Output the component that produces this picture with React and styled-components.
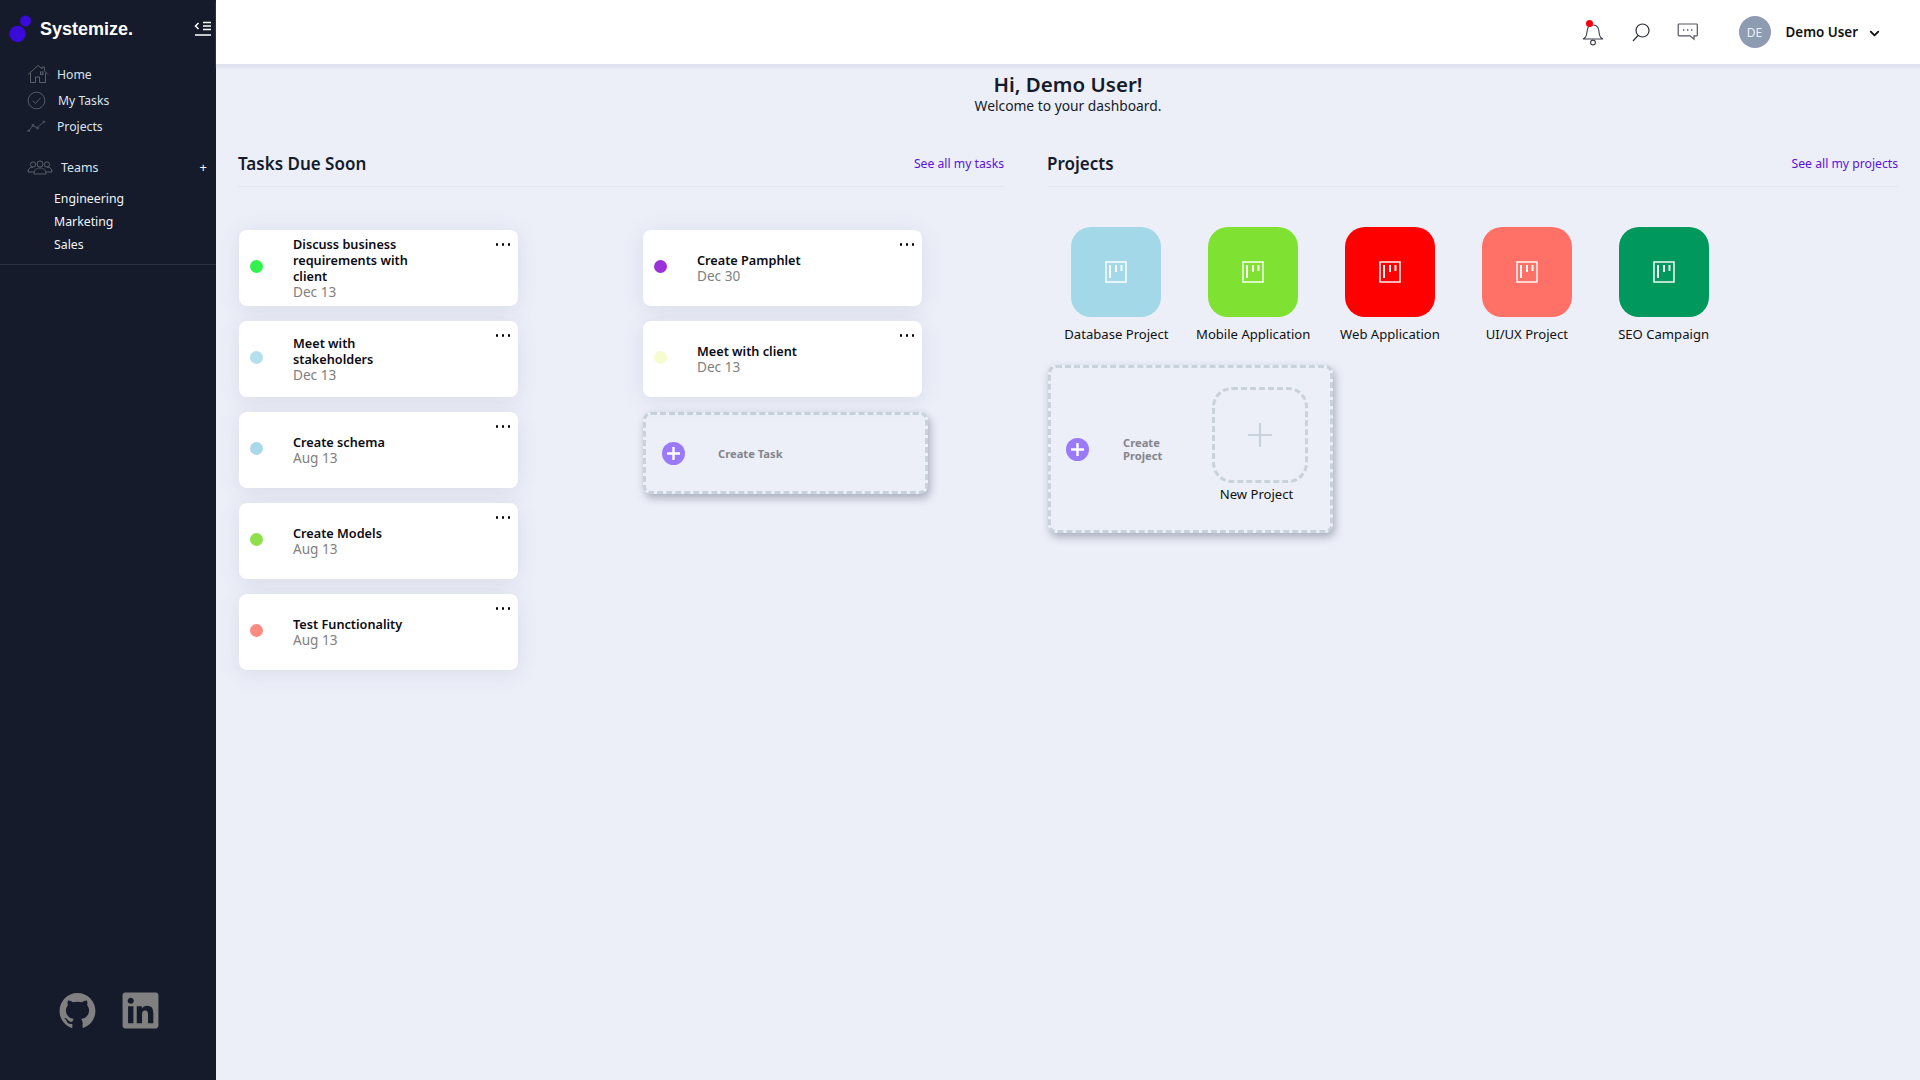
import React from "react";
import styled, { createGlobalStyle } from "styled-components";
import { FaLinkedin } from "react-icons/fa";
import { AiFillGithub } from "react-icons/ai";
import { ChevronDown } from "lucide-react";

const GlobalStyle = createGlobalStyle`
  html, body {
    margin: 0;
    padding: 0;
    height: 100%;
    background: #eceff8;
    font-family: "Noto Sans", sans-serif;
  }
  * {
    box-sizing: border-box;
  }
`;

const tasksLeft = [
  { id: 1, name: "Discuss business requirements with client", due: "Dec 13", color: "#33f24d" },
  { id: 2, name: "Meet with stakeholders", due: "Dec 13", color: "#b5dfec" },
  { id: 3, name: "Create schema", due: "Aug 13", color: "#a9d9e8" },
  { id: 4, name: "Create Models", due: "Aug 13", color: "#8ee04d" },
  { id: 5, name: "Test Functionality", due: "Aug 13", color: "#fb8a80" },
];

const tasksRight = [
  { id: 6, name: "Create Pamphlet", due: "Dec 30", color: "#9b30d9" },
  { id: 7, name: "Meet with client", due: "Dec 13", color: "#f6fbd0" },
];

const projects = [
  { name: "Database Project", color: "#a3d8e8" },
  { name: "Mobile Application", color: "#7fe232" },
  { name: "Web Application", color: "#ff0000" },
  { name: "UI/UX Project", color: "#ff7066" },
  { name: "SEO Campaign", color: "#00985c" },
];

const Page = styled.div`
  display: flex;
  min-height: 1080px;
`;

const Sidebar = styled.aside`
  width: 216px;
  flex-shrink: 0;
  height: 1080px;
  background: #151b2a;
  display: flex;
  flex-direction: column;
`;

const Brand = styled.div`
  display: flex;
  align-items: center;
  height: 58px;
  padding: 0 4px 0 9px;
`;

const BrandName = styled.span`
  margin-left: 9px;
  flex: 1;
  font-family: "Liberation Sans", Arial, sans-serif;
  font-weight: 700;
  font-size: 18px;
  color: #fff;
`;

const Nav = styled.nav`
  display: flex;
  flex-direction: column;
  padding-left: 27px;
  margin-top: 3px;
`;

const NavItem = styled.a`
  display: flex;
  align-items: center;
  height: 26px;
  color: #dbe3ee;
  font-size: 12.2px;
  svg {
    width: ${(p) => p.$iconW || 22}px;
    flex-shrink: 0;
    margin-right: ${(p) => p.$gap || 9}px;
  }
`;

const TeamsRow = styled.div`
  display: flex;
  align-items: center;
  height: 26px;
  margin-top: 15px;
  padding: 0 9px 0 27px;
  color: #dbe3ee;
  font-size: 12.4px;
  svg {
    width: 26px;
    margin-right: 8px;
  }
  span:first-of-type {
    flex: 1;
  }
`;

const Plus = styled.span`
  color: #fff;
  font-size: 13px;
`;

const TeamList = styled.div`
  display: flex;
  flex-direction: column;
  padding: 7px 0 8px 54px;
  border-bottom: 1px solid #2b3144;
`;

const TeamLink = styled.a`
  height: 23px;
  line-height: 23px;
  color: #f1f4f8;
  font-size: 12.3px;
`;

const Socials = styled.div`
  margin-top: auto;
  display: flex;
  gap: 22px;
  padding: 0 0 49px 57px;
  color: #808080;
  svg {
    width: 41px;
    height: 41px;
    display: block;
  }
`;

const Content = styled.div`
  flex: 1;
  display: flex;
  flex-direction: column;
`;

const Topbar = styled.header`
  height: 66px;
  background: #fff;
  border-bottom: 2px solid #e0e3ee;
  box-shadow: 0 2px 2px rgba(200, 205, 225, 0.35);
  display: flex;
  align-items: center;
  justify-content: flex-end;
  padding: 0 38px 0 0;
`;

const TopIcon = styled.button`
  position: relative;
  border: 0;
  background: none;
  padding: 0;
  display: flex;
  margin-right: ${(p) => p.$mr}px;
  margin-top: ${(p) => p.$mt || 0}px;
`;

const RedDot = styled.i`
  position: absolute;
  left: 4px;
  top: -2px;
  width: 7px;
  height: 7px;
  border-radius: 50%;
  background: #f5000c;
`;

const Avatar = styled.div`
  width: 32px;
  height: 32px;
  border-radius: 50%;
  background: #8f9bb3;
  color: #eef1f6;
  font-size: 12px;
  display: flex;
  align-items: center;
  justify-content: center;
`;

const UserName = styled.span`
  margin: 0 9px 0 15px;
  font-size: 13.4px;
  font-weight: 600;
  color: #111;
`;

const Main = styled.main`
  padding: 6px 22px 0 22px;
`;

const Greeting = styled.div`
  text-align: center;
  h1 {
    margin: 0;
    font-size: 20.5px;
    line-height: 24px;
    font-weight: 600;
    color: #151b2a;
  }
  p {
    margin: 1px 0 0;
    font-size: 13.8px;
    line-height: 18px;
    color: #151b2a;
  }
`;

const Columns = styled.div`
  display: grid;
  grid-template-columns: 766px 851px;
  column-gap: 43px;
  margin-top: 34px;
`;

const SectionHead = styled.div`
  display: flex;
  justify-content: space-between;
  align-items: center;
  height: 38px;
  border-bottom: 1px solid #e4e7f0;
  padding-bottom: 9px;
  h2 {
    margin: 0;
    font-size: 17px;
    font-weight: 600;
    color: #151b2a;
  }
  a {
    font-size: 12.2px;
    color: #5a10e0;
  }
`;

const TaskGrid = styled.div`
  display: grid;
  grid-template-columns: 404px 1fr;
  margin: 43px 0 0 1px;
`;

const TaskColumn = styled.div`
  display: flex;
  flex-direction: column;
  gap: 15px;
`;

const TaskCard = styled.div`
  position: relative;
  width: 279px;
  height: 76px;
  background: #fff;
  border-radius: 8px;
  box-shadow: 0 3px 22px rgba(60, 70, 100, 0.1);
  display: flex;
  align-items: center;
  padding-left: 11px;
`;

const Dot = styled.span`
  width: 13px;
  height: 13px;
  border-radius: 50%;
  background: ${(p) => p.$color};
  flex-shrink: 0;
  margin: 0 30px 4px 0;
`;

const TaskText = styled.div`
  width: 122px;
  padding-bottom: 2px;
  strong {
    display: block;
    font-size: 12.7px;
    line-height: 16px;
    font-weight: 600;
    color: #0c0c12;
  }
  span {
    display: block;
    font-size: 13.6px;
    line-height: 15px;
    color: #808080;
  }
`;

const More = styled.div`
  position: absolute;
  top: 13px;
  right: 8px;
  display: flex;
  gap: 3.5px;
  i {
    width: 2.5px;
    height: 2.5px;
    border-radius: 1px;
    background: #000;
  }
`;

const DashedCard = styled.div`
  width: 285px;
  height: ${(p) => p.$h}px;
  border: 3px dashed #c9d2da;
  border-radius: 8px;
  background: #eceff8;
  box-shadow: 2px 4px 8px rgba(40, 50, 70, 0.35);
  display: flex;
  align-items: center;
`;

const AddCircle = styled.span`
  width: 23px;
  height: 23px;
  border-radius: 50%;
  background: #9a7af8;
  display: flex;
  flex-shrink: 0;
  align-items: center;
  justify-content: center;
  margin-left: ${(p) => p.$ml}px;
`;

const AddLabel = styled.span`
  margin-left: ${(p) => p.$ml}px;
  width: ${(p) => p.$w || "auto"};
  font-size: 11.2px;
  line-height: 13px;
  font-weight: 700;
  color: #85858c;
`;

const ProjectRow = styled.div`
  display: flex;
  margin: 40px 0 0 1px;
`;

const ProjectItem = styled.div`
  width: 136.8px;
  display: flex;
  flex-direction: column;
  align-items: center;
  font-size: 13.1px;
  color: #111;
  white-space: nowrap;
  span {
    margin-top: 8px;
    line-height: 18px;
  }
`;

const ProjectTile = styled.div`
  width: 90px;
  height: 90px;
  border-radius: 20px;
  background: ${(p) => p.$color};
  display: flex;
  align-items: center;
  justify-content: center;
`;

const NewProjectWrap = styled.div`
  margin: 22px 0 0 1px;
`;

const NewProject = styled.div`
  display: flex;
  flex-direction: column;
  align-items: center;
  margin: 0 0 9px 42px;
  font-size: 13.1px;
  color: #111;
  span {
    margin-top: 2px;
    margin-left: -7px;
    line-height: 18px;
  }
`;

const NewTile = styled.div`
  width: 96px;
  height: 96px;
  border: 3px dashed #c9d2da;
  border-radius: 20px;
  display: flex;
  align-items: center;
  justify-content: center;
`;

const BoardIcon = () => (
  <svg width="22" height="22" viewBox="0 0 22 22" fill="none">
    <rect x="1" y="1" width="20" height="20" stroke="#fff" strokeWidth="1.5" opacity="0.95" />
    <path d="M5 4v13M11 4v7M16.500 4v6" stroke="#fff" strokeWidth="2" opacity="0.95" />
  </svg>
);

const PlusMark = ({ size = 13, color = "#fff", width = 2.4 }) => (
  <svg width={size} height={size} viewBox="0 0 13 13">
    <path d="M6.5 0.5v12M0.5 6.5h12" stroke={color} strokeWidth={width} strokeLinecap="round" />
  </svg>
);

const Logo = () => (
  <svg width="22" height="28" viewBox="0 0 22 28">
    <circle cx="16.500" cy="6" r="5.500" fill="#3a0ad8" />
    <circle cx="8.500" cy="19" r="8.200" fill="#3a0ad8" />
  </svg>
);

const CollapseIcon = () => (
  <svg width="18" height="16" viewBox="0 0 18 16" fill="none" style={{ flexShrink: 0 }}>
    <path d="M4.500 2L1.500 5l3 3" stroke="#fff" strokeWidth="1.500" />
    <path d="M9 1.500h8M9 5h8M9 8.500h8M1 14h16" stroke="#fff" strokeWidth="1.600" />
  </svg>
);

const HomeIcon = () => (
  <svg viewBox="0 0 22 20" fill="none" stroke="#5a5e68" strokeWidth="1">
    <path d="M1 10.500L11 1.500l4 3.300V3h2.400v3.800L21 10.500" />
    <path d="M3.500 9v9.500h5v-5.500h4v5.500h6V9" />
    <rect x="13.500" y="8" width="2.500" height="2.500" />
  </svg>
);

const CheckIcon = () => (
  <svg viewBox="0 0 20 20" fill="none" stroke="#5a5e68" strokeWidth="1">
    <circle cx="10" cy="10" r="8.800" />
    <path d="M6 10.200l3 3 5.200-6" />
  </svg>
);

const TrendIcon = () => (
  <svg viewBox="0 0 22 14" fill="none" stroke="#5a5e68" strokeWidth="1">
    <path d="M1.800 12.200l4.600-6 5 2.600 6-6" />
    <circle cx="1.800" cy="12.200" r="1" />
    <circle cx="6.600" cy="5.800" r="1" />
    <circle cx="11.600" cy="9" r="1" />
    <circle cx="18.600" cy="2" r="1" />
  </svg>
);

const TeamIcon = () => (
  <svg viewBox="0 0 26 15" fill="none" stroke="#5a5e68" strokeWidth="1">
    <circle cx="13" cy="4" r="3" />
    <circle cx="6" cy="4.500" r="2.600" />
    <circle cx="20" cy="4.500" r="2.600" />
    <path d="M7 14c0-4 2.500-6 6-6s6 2 6 6z" />
    <path d="M7.500 12H1c0-3 1.800-5 5-5M18.500 12H25c0-3-1.800-5-5-5" />
  </svg>
);

const BellIcon = () => (
  <svg width="22" height="24" viewBox="0 0 22 24" fill="none" stroke="#3d3f4a" strokeWidth="1.100">
    <path d="M1 17c2-.8 3-1.500 3.500-4l.8-5c.5-3 2.700-5 5.700-5s5.200 2 5.700 5l.8 5c.5 2.500 1.500 3.200 3.500 4z" />
    <circle cx="11" cy="20.500" r="2.400" />
  </svg>
);

const SearchIcon = () => (
  <svg width="18" height="19" viewBox="0 0 18 19" fill="none" stroke="#2f313b" strokeWidth="1.200">
    <circle cx="10.500" cy="7.500" r="6.500" />
    <path d="M6 12.500L1 18" />
  </svg>
);

const ChatIcon = () => (
  <svg width="21" height="18" viewBox="0 0 21 18" fill="none" stroke="#55535f" strokeWidth="1.200">
    <path d="M2 1h17.500c.5 0 .8.300.8.800V12c0 .5-.3.800-.8.800h-2.500v3.500l-4-3.500H2c-.5 0-.8-.300-.8-.800V1.800C1.200 1.300 1.500 1 2 1z" />
    <path d="M6 7h1.400M10 7h1.400M14 7h1.400" strokeWidth="1.600" />
  </svg>
);

function Task({ task }) {
  return (
    <TaskCard>
      <Dot $color={task.color} />
      <TaskText>
        <strong>{task.name}</strong>
        <span>{task.due}</span>
      </TaskText>
      <More>
        <i />
        <i />
        <i />
      </More>
    </TaskCard>
  );
}

export default function App() {
  return (
    <Page>
      <GlobalStyle />
      <Sidebar>
        <Brand>
          <Logo />
          <BrandName>Systemize.</BrandName>
          <CollapseIcon />
        </Brand>
        <Nav>
          <NavItem $gap={8}>
            <HomeIcon />
            Home
          </NavItem>
          <NavItem $iconW={19} $gap={12}>
            <CheckIcon />
            My Tasks
          </NavItem>
          <NavItem $iconW={20} $gap={10}>
            <TrendIcon />
            Projects
          </NavItem>
        </Nav>
        <TeamsRow>
          <TeamIcon />
          <span>Teams</span>
          <Plus>+</Plus>
        </TeamsRow>
        <TeamList>
          <TeamLink>Engineering</TeamLink>
          <TeamLink>Marketing</TeamLink>
          <TeamLink>Sales</TeamLink>
        </TeamList>
        <Socials>
          <AiFillGithub />
          <FaLinkedin />
        </Socials>
      </Sidebar>
      <Content>
        <Topbar>
          <TopIcon $mr={28} $mt={4}>
            <BellIcon />
            <RedDot />
          </TopIcon>
          <TopIcon $mr={27}>
            <SearchIcon />
          </TopIcon>
          <TopIcon $mr={41}>
            <ChatIcon />
          </TopIcon>
          <Avatar>DE</Avatar>
          <UserName>Demo User</UserName>
          <ChevronDown size={15} strokeWidth={3} color="#111" style={{ marginTop: 3 }} />
        </Topbar>
        <Main>
          <Greeting>
            <h1>Hi, Demo User!</h1>
            <p>Welcome to your dashboard.</p>
          </Greeting>
          <Columns>
            <section>
              <SectionHead>
                <h2>Tasks Due Soon</h2>
                <a>See all my tasks</a>
              </SectionHead>
              <TaskGrid>
                <TaskColumn>
                  {tasksLeft.map((t) => (
                    <Task key={t.id} task={t} />
                  ))}
                </TaskColumn>
                <TaskColumn>
                  {tasksRight.map((t) => (
                    <Task key={t.id} task={t} />
                  ))}
                  <DashedCard $h={82}>
                    <AddCircle $ml={16}>
                      <PlusMark />
                    </AddCircle>
                    <AddLabel $ml={33}>Create Task</AddLabel>
                  </DashedCard>
                </TaskColumn>
              </TaskGrid>
            </section>
            <section>
              <SectionHead>
                <h2>Projects</h2>
                <a>See all my projects</a>
              </SectionHead>
              <ProjectRow>
                {projects.map((p) => (
                  <ProjectItem key={p.name}>
                    <ProjectTile $color={p.color}>
                      <BoardIcon />
                    </ProjectTile>
                    <span>{p.name}</span>
                  </ProjectItem>
                ))}
              </ProjectRow>
              <NewProjectWrap>
                <DashedCard $h={168}>
                  <AddCircle $ml={15}>
                    <PlusMark />
                  </AddCircle>
                  <AddLabel $ml={34} $w="47px">
                    Create Project
                  </AddLabel>
                  <NewProject>
                    <NewTile>
                      <PlusMark size={24} color="#c9d2da" width={1.2} />
                    </NewTile>
                    <span>New Project</span>
                  </NewProject>
                </DashedCard>
              </NewProjectWrap>
            </section>
          </Columns>
        </Main>
      </Content>
    </Page>
  );
}
